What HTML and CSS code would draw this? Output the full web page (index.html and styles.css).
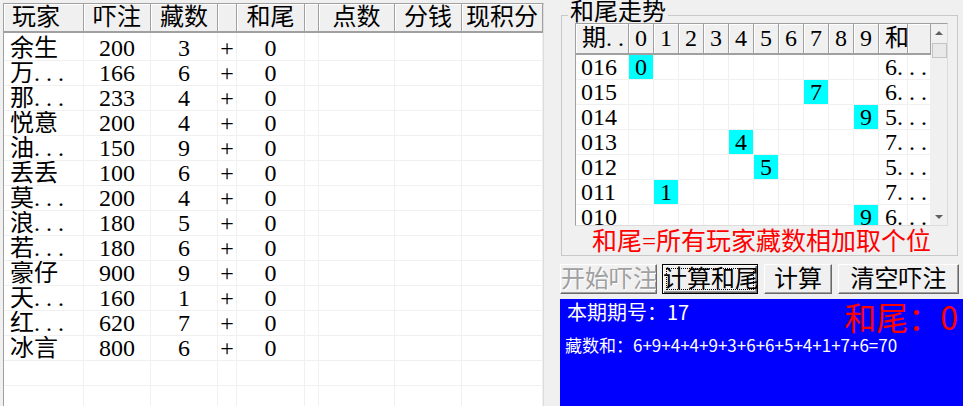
FILE: index.html
```html
<!DOCTYPE html>
<html lang="zh">
<head>
<meta charset="utf-8">
<link rel="stylesheet" href="styles.css">
</head>
<body>
<div class="app">
  <div class="list">
    <div class="lrow lhead">
      <div class="hc left">玩家</div><div class="hc">吓注</div><div class="hc">藏数</div><div class="hc"></div><div class="hc">和尾</div><div class="hc"></div><div class="hc">点数</div><div class="hc">分钱</div><div class="hc">现积分</div>
    </div>
    <div class="lbody">
      <div class="lrow"><div class="c left">余生</div><div class="c">200</div><div class="c">3</div><div class="c">+</div><div class="c">0</div><div class="c"></div><div class="c"></div><div class="c"></div><div class="c"></div></div>
      <div class="lrow"><div class="c left">万. . .</div><div class="c">166</div><div class="c">6</div><div class="c">+</div><div class="c">0</div><div class="c"></div><div class="c"></div><div class="c"></div><div class="c"></div></div>
      <div class="lrow"><div class="c left">那. . .</div><div class="c">233</div><div class="c">4</div><div class="c">+</div><div class="c">0</div><div class="c"></div><div class="c"></div><div class="c"></div><div class="c"></div></div>
      <div class="lrow"><div class="c left">悦意</div><div class="c">200</div><div class="c">4</div><div class="c">+</div><div class="c">0</div><div class="c"></div><div class="c"></div><div class="c"></div><div class="c"></div></div>
      <div class="lrow"><div class="c left">油. . .</div><div class="c">150</div><div class="c">9</div><div class="c">+</div><div class="c">0</div><div class="c"></div><div class="c"></div><div class="c"></div><div class="c"></div></div>
      <div class="lrow"><div class="c left">丢丢</div><div class="c">100</div><div class="c">6</div><div class="c">+</div><div class="c">0</div><div class="c"></div><div class="c"></div><div class="c"></div><div class="c"></div></div>
      <div class="lrow"><div class="c left">莫. . .</div><div class="c">200</div><div class="c">4</div><div class="c">+</div><div class="c">0</div><div class="c"></div><div class="c"></div><div class="c"></div><div class="c"></div></div>
      <div class="lrow"><div class="c left">浪. . .</div><div class="c">180</div><div class="c">5</div><div class="c">+</div><div class="c">0</div><div class="c"></div><div class="c"></div><div class="c"></div><div class="c"></div></div>
      <div class="lrow"><div class="c left">若. . .</div><div class="c">180</div><div class="c">6</div><div class="c">+</div><div class="c">0</div><div class="c"></div><div class="c"></div><div class="c"></div><div class="c"></div></div>
      <div class="lrow"><div class="c left">豪仔</div><div class="c">900</div><div class="c">9</div><div class="c">+</div><div class="c">0</div><div class="c"></div><div class="c"></div><div class="c"></div><div class="c"></div></div>
      <div class="lrow"><div class="c left">天. . .</div><div class="c">160</div><div class="c">1</div><div class="c">+</div><div class="c">0</div><div class="c"></div><div class="c"></div><div class="c"></div><div class="c"></div></div>
      <div class="lrow"><div class="c left">红. . .</div><div class="c">620</div><div class="c">7</div><div class="c">+</div><div class="c">0</div><div class="c"></div><div class="c"></div><div class="c"></div><div class="c"></div></div>
      <div class="lrow"><div class="c left">冰言</div><div class="c">800</div><div class="c">6</div><div class="c">+</div><div class="c">0</div><div class="c"></div><div class="c"></div><div class="c"></div><div class="c"></div></div>
      <div class="lrow"><div class="c"></div><div class="c"></div><div class="c"></div><div class="c"></div><div class="c"></div><div class="c"></div><div class="c"></div><div class="c"></div><div class="c"></div></div>
      <div class="lrow"><div class="c"></div><div class="c"></div><div class="c"></div><div class="c"></div><div class="c"></div><div class="c"></div><div class="c"></div><div class="c"></div><div class="c"></div></div>
    </div>
  </div>

  <div class="side">
    <fieldset class="group">
      <legend>和尾走势</legend>
      <div class="trend">
        <div class="tgrid">
          <div class="trow thead">
            <div class="th tleft">期. .</div><div class="th">0</div><div class="th">1</div><div class="th">2</div><div class="th">3</div><div class="th">4</div><div class="th">5</div><div class="th">6</div><div class="th">7</div><div class="th">8</div><div class="th">9</div><div class="th tleft">和</div><div class="th"></div>
          </div>
          <div class="trow"><div class="td tleft">016</div><div class="td hit">0</div><div class="td"></div><div class="td"></div><div class="td"></div><div class="td"></div><div class="td"></div><div class="td"></div><div class="td"></div><div class="td"></div><div class="td"></div><div class="td tsum">6. . .</div><div class="td"></div></div>
          <div class="trow"><div class="td tleft">015</div><div class="td"></div><div class="td"></div><div class="td"></div><div class="td"></div><div class="td"></div><div class="td"></div><div class="td"></div><div class="td hit">7</div><div class="td"></div><div class="td"></div><div class="td tsum">6. . .</div><div class="td"></div></div>
          <div class="trow"><div class="td tleft">014</div><div class="td"></div><div class="td"></div><div class="td"></div><div class="td"></div><div class="td"></div><div class="td"></div><div class="td"></div><div class="td"></div><div class="td"></div><div class="td hit">9</div><div class="td tsum">5. . .</div><div class="td"></div></div>
          <div class="trow"><div class="td tleft">013</div><div class="td"></div><div class="td"></div><div class="td"></div><div class="td"></div><div class="td hit">4</div><div class="td"></div><div class="td"></div><div class="td"></div><div class="td"></div><div class="td"></div><div class="td tsum">7. . .</div><div class="td"></div></div>
          <div class="trow"><div class="td tleft">012</div><div class="td"></div><div class="td"></div><div class="td"></div><div class="td"></div><div class="td"></div><div class="td hit">5</div><div class="td"></div><div class="td"></div><div class="td"></div><div class="td"></div><div class="td tsum">5. . .</div><div class="td"></div></div>
          <div class="trow"><div class="td tleft">011</div><div class="td"></div><div class="td hit">1</div><div class="td"></div><div class="td"></div><div class="td"></div><div class="td"></div><div class="td"></div><div class="td"></div><div class="td"></div><div class="td"></div><div class="td tsum">7. . .</div><div class="td"></div></div>
          <div class="trow"><div class="td tleft">010</div><div class="td"></div><div class="td"></div><div class="td"></div><div class="td"></div><div class="td"></div><div class="td"></div><div class="td"></div><div class="td"></div><div class="td"></div><div class="td hit">9</div><div class="td tsum">6. . .</div><div class="td"></div></div>
        </div>
        <div class="vscroll">
          <div class="arrow up"></div>
          <div class="thumb"></div>
          <div class="track"></div>
          <div class="arrow down"></div>
        </div>
      </div>
      <div class="note">和尾=所有玩家藏数相加取个位</div>
    </fieldset>

    <div class="buttons">
      <button class="btn b1" disabled>开始吓注</button>
      <button class="btn b2 default">计算和尾</button>
      <button class="btn b3">计算</button>
      <button class="btn b4">清空吓注</button>
    </div>

    <div class="result">
      <div class="r1">
        <span class="period">本期期号：17</span>
        <span class="tail">和尾：0</span>
      </div>
      <div class="sum">藏数和：6+9+4+4+9+3+6+6+5+4+1+7+6=70</div>
    </div>
  </div>
</div>
</body>
</html>
```

FILE: styles.css
```css
* { box-sizing: border-box; }

body {
  margin: 0;
  width: 963px;
  height: 406px;
  overflow: hidden;
  background: #f0f0f0;
  color: #000;
  font-family: "Liberation Serif", "Noto Sans CJK SC", serif;
  font-size: 24px;
}

.app {
  display: flex;
  height: 406px;
}

/* ---------- left list view ---------- */
.list {
  margin: 3px 16px 0 3px;
  width: 541px;
  height: 410px;
  border-top: 1px solid #a0a0a0;
  border-left: 1px solid #a0a0a0;
  border-right: 1px solid #dcdcdc;
  background: #fff;
  overflow: hidden;
}

.lrow {
  display: grid;
  grid-template-columns: 80px 67px 67px 19px 68px 14px 76px 67px 81px;
}

.lhead {
  height: 29px;
  background: #f0f0f0;
  border-bottom: 2px solid #a0a0a0;
}

.hc {
  border-right: 1px solid #a0a0a0;
  box-shadow: inset 1px 1px 0 #fff;
  line-height: 27px;
  text-align: center;
  white-space: nowrap;
  overflow: hidden;
}

.c {
  height: 25px;
  border-right: 1px solid #f0f0f0;
  border-bottom: 1px solid #f0f0f0;
  line-height: 24px;
  text-align: center;
  white-space: nowrap;
  overflow: hidden;
}

.lbody .lrow:first-child .c {
  height: 28px;
  padding-top: 3px;
}

.left {
  text-align: left;
  padding-left: 6px;
}

.hc.left { padding-left: 8px; }

/* ---------- right side ---------- */
.side {
  width: 403px;
  display: flex;
  flex-direction: column;
}

.group {
  margin: 4px 5px 0 1px;
  padding: 0 9px 0 13px;
  border: 1px solid #c8c8c8;
  min-width: 0;
}

.group legend {
  font-size: 24px;
  line-height: 16px;
  padding: 0 2px 6px;
  margin-left: -7px;
}

.trend {
  display: flex;
  height: 203px;
  margin-top: -3px;
  border: 1px solid;
  border-color: #a0a0a0 #dcdcdc #dcdcdc #a0a0a0;
  background: #fff;
}

.tgrid {
  width: 355px;
  overflow: hidden;
}

.trow {
  display: grid;
  grid-template-columns: 53px repeat(10, 25px) 29px 23px;
}

.thead {
  height: 31px;
  background: #f0f0f0;
  border-bottom: 2px solid #a0a0a0;
}

.th {
  border-right: 1px solid #a0a0a0;
  box-shadow: inset 1px 1px 0 #fff;
  line-height: 29px;
  text-align: center;
  white-space: nowrap;
  overflow: hidden;
}

.td {
  height: 25px;
  border-right: 1px solid #f0f0f0;
  border-bottom: 1px solid #f0f0f0;
  line-height: 24px;
  text-align: center;
  white-space: nowrap;
}

.th.tleft { text-align: left; padding-left: 6px; }
.td.tleft { text-align: left; padding-left: 5px; }
.td.tsum { text-align: left; padding-left: 6px; overflow: visible; }

.td.hit {
  background: #00ffff;
}

.vscroll {
  width: 16px;
  display: flex;
  flex-direction: column;
  align-items: center;
  background: #f0f0f0;
}

.arrow {
  width: 16px;
  height: 17px;
  display: flex;
  align-items: center;
  justify-content: center;
}

.arrow::before {
  content: "";
  border-left: 4px solid transparent;
  border-right: 4px solid transparent;
}

.arrow.up::before { border-bottom: 4px solid #606060; }
.arrow.down::before { border-top: 4px solid #606060; }

.thumb {
  width: 15px;
  height: 15px;
  margin-top: 2px;
  background: #e9e9e9;
  border: 1px solid #c4c4c4;
}

.track { flex: 1; }

.note {
  padding-top: 3px;
  line-height: 26px;
  font-size: 25px;
  color: #ff0000;
  text-align: center;
  white-space: nowrap;
}

/* ---------- buttons ---------- */
.buttons {
  display: flex;
  margin-top: 8px;
  height: 30px;
}

.btn {
  height: 30px;
  padding: 0;
  font: inherit;
  color: #000;
  background: #f0f0f0;
  border: 1px solid;
  border-color: #fff #696969 #696969 #fff;
  box-shadow: inset -1px -1px 0 #a0a0a0;
  line-height: 26px;
  white-space: nowrap;
  overflow: hidden;
  text-align: center;
}

.b1 { width: 97px; margin-right: 5px; color: #a0a0a0; text-shadow: 1px 1px 0 #fff; }
.b2 { width: 96px; margin-right: 6px; }
.b3 { width: 68px; margin-right: 6px; }
.b4 { width: 121px; }

.btn.default {
  border: 1px solid #000;
  box-shadow: inset 1px 1px 0 #fff, inset -1px -1px 0 #696969, inset -2px -2px 0 #a0a0a0;
  outline: 1px dotted #000;
  outline-offset: -5px;
}

/* ---------- result panel ---------- */
.result {
  flex: 1;
  margin-top: 5px;
  background: #0000ff;
  color: #fff;
  font-family: "Noto Sans CJK SC", sans-serif;
  padding: 0 5px 0 7px;
}

.r1 {
  display: flex;
  justify-content: space-between;
  height: 34px;
}

.period {
  font-size: 20px;
  line-height: 26px;
}

.tail {
  font-size: 32px;
  line-height: 34px;
  color: #ff0000;
}

.sum {
  font-size: 17px;
  line-height: 24px;
  margin-left: -2px;
}
```
